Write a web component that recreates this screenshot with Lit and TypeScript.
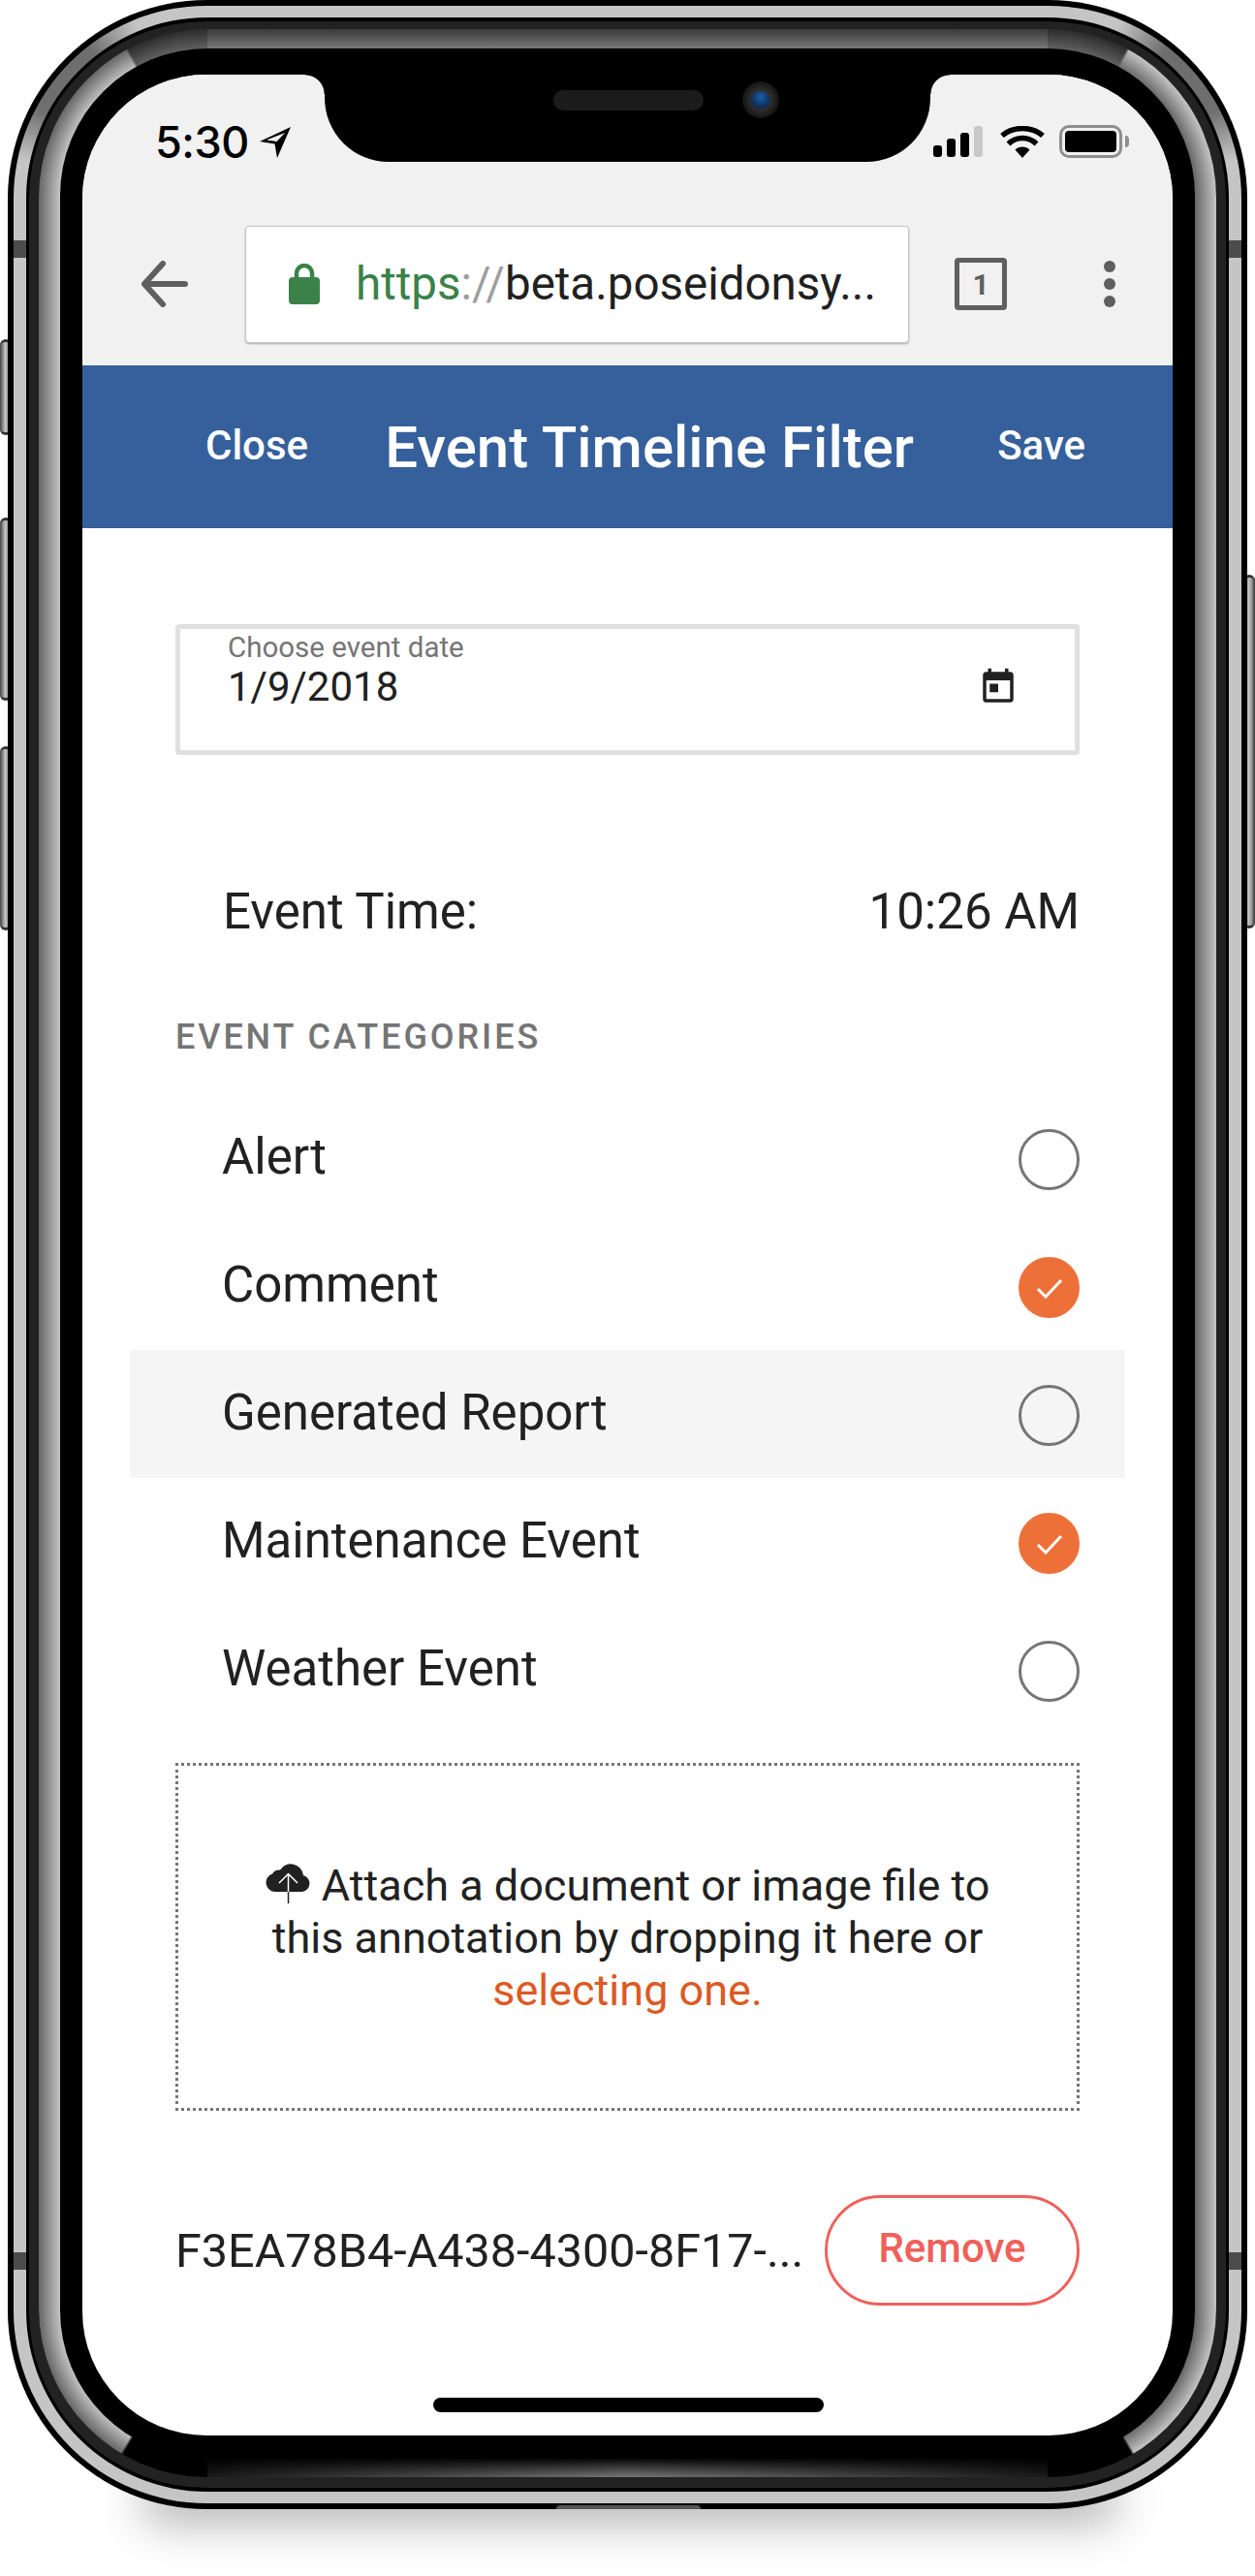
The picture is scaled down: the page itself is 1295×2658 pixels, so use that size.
import { LitElement, html, css, svg } from 'lit';
import { customElement } from 'lit/decorators.js';

const categories = [
  { name: 'Alert', on: false },
  { name: 'Comment', on: true },
  { name: 'Generated Report', on: false, hover: true },
  { name: 'Maintenance Event', on: true },
  { name: 'Weather Event', on: false }
];

const locationIcon = svg`<path fill-rule="evenodd" d="M32 1 0 16l15.500 2.500L18 33zM26 7 17.600 16 7 14.600z" fill="#000"/>`;

@customElement('app-root')
export class AppRoot extends LitElement {
  static styles = css`
    :host {
      display: block;
      height: 2658px;
      position: relative;
      overflow: hidden;
      background: #fff;
      font-family: Roboto, sans-serif;
      color: #212121;
    }

    .sombra {
      position: absolute;
      left: 150px;
      width: 1000px;
      top: 2560px;
      height: 40px;
      background: rgba(0, 0, 0, 0.36);
      filter: blur(24px);
    }

    .lateral {
      position: absolute;
      width: 12px;
      border-radius: 6px;
      background: linear-gradient(90deg, #444, #c4c4c4 45%, #999 70%, #333);
      border-top: 3px solid #333;
      border-bottom: 3px solid #333;
      box-sizing: border-box;
    }

    .marco {
      position: relative;
      box-sizing: border-box;
      width: 1279px;
      height: 2589px;
      margin-left: 8px;
      border-radius: 205px;
      background: #000;
      padding: 6px;
    }

    .plata {
      height: 100%;
      box-sizing: border-box;
      padding: 12px 13px;
      border-radius: 199px;
      background-color: #c6c5c6;
      background-repeat: no-repeat;
      background-size: 199px 199px;
      background-position: 0 0, 100% 0;
      background-image:
        conic-gradient(from 270deg at 100% 100%, transparent 0 12deg, #6e6e6e 28deg 52deg, transparent 68deg),
        conic-gradient(from 0deg at 0 100%, transparent 22deg, #6e6e6e 38deg 62deg, transparent 78deg);
    }

    .antena {
      position: absolute;
      width: 13px;
      height: 18px;
      background: #4c4c4c;
    }

    .negro {
      height: 100%;
      box-sizing: border-box;
      padding: 4px 3px;
      border-radius: 187px;
      background: #000;
    }

    .oscuro {
      height: 100%;
      box-sizing: border-box;
      padding: 8px 10px 11px;
      border-radius: 183px;
      background: #222;
    }

    .bisel {
      position: relative;
      overflow: hidden;
      height: 100%;
      box-sizing: border-box;
      padding: 20px 22px;
      border-radius: 174px;
      background-color: #000;
      background-repeat: no-repeat;
      background-image:
        radial-gradient(circle at 100% 100%, #646464 152px, #2c2c2c 174px),
        radial-gradient(circle at 0 100%, #646464 152px, #2c2c2c 174px),
        linear-gradient(90deg, #666, #c4c4c4),
        linear-gradient(90deg, #666, #c4c4c4),
        linear-gradient(180deg, #3a3a3a, #777),
        linear-gradient(180deg, #000, transparent),
        linear-gradient(90deg, #1a1a1a, #777 50%, #1a1a1a);
      background-size:
        174px 174px, 174px 174px,
        22px calc(100% - 348px), 22px calc(100% - 348px),
        calc(100% - 348px) 20px, calc(100% - 348px) 20px, calc(100% - 348px) 20px;
      background-position:
        0 0, 100% 0,
        0 50%, 100% 50%,
        50% 0, 50% 100%, 50% 100%;
    }

    /* brillo curvo de cada esquina del bisel */
    .esquina {
      position: absolute;
      width: 174px;
      height: 174px;
    }

    .esquina.si {
      left: 0;
      top: 0;
      background: radial-gradient(circle at 100% 100%, #c4c4c4 152px, #666 174px);
      -webkit-mask-image: conic-gradient(from 270deg at 100% 100%, #000 61deg, transparent 62deg);
      mask-image: conic-gradient(from 270deg at 100% 100%, #000 61deg, transparent 62deg);
    }

    .esquina.sd {
      right: 0;
      top: 0;
      background: radial-gradient(circle at 0 100%, #666 152px, #c4c4c4 174px);
      -webkit-mask-image: conic-gradient(from 0deg at 0 100%, transparent 28deg, #000 29deg);
      mask-image: conic-gradient(from 0deg at 0 100%, transparent 28deg, #000 29deg);
    }

    .esquina.ii {
      left: 0;
      bottom: 0;
      background: radial-gradient(circle at 100% 0, #c4c4c4 152px, #666 174px);
      -webkit-mask-image: conic-gradient(from 180deg at 100% 0, transparent 30deg, #000 31deg);
      mask-image: conic-gradient(from 180deg at 100% 0, transparent 30deg, #000 31deg);
    }

    .esquina.id {
      right: 0;
      bottom: 0;
      background: radial-gradient(circle at 0 0, #666 152px, #c4c4c4 174px);
      -webkit-mask-image: conic-gradient(from 90deg at 0 0, #000 59deg, transparent 60deg);
      mask-image: conic-gradient(from 90deg at 0 0, #000 59deg, transparent 60deg);
    }

    .borde {
      position: relative;
      height: 100%;
      box-sizing: border-box;
      padding: 27px 23px 23px;
      border-radius: 152px;
      background: #000;
    }

    .pantalla {
      position: relative;
      height: 100%;
      overflow: hidden;
      border-radius: 128px;
      background: #fff;
      display: flex;
      flex-direction: column;
    }

    /* muesca, va encima de la barra de estado */
    .muesca {
      position: absolute;
      top: 0;
      left: 250px;
      width: 625px;
      height: 90px;
      background: #000;
      border-radius: 0 0 66px 66px;
    }

    .muesca::before,
    .muesca::after {
      content: '';
      position: absolute;
      top: 0;
      width: 20px;
      height: 20px;
      background: radial-gradient(circle at 0 100%, transparent 19px, #000 20px);
    }

    .muesca::before {
      left: -20px;
    }

    .muesca::after {
      right: -20px;
      background: radial-gradient(circle at 100% 100%, transparent 19px, #000 20px);
    }

    .altavoz {
      position: absolute;
      left: 236px;
      top: 16px;
      width: 155px;
      height: 21px;
      border-radius: 11px;
      background: #1b1b1b;
    }

    .camara {
      position: absolute;
      left: 431px;
      top: 7px;
      width: 38px;
      height: 38px;
      border-radius: 50%;
      background: radial-gradient(circle, #2d2d2d 40%, #101010 75%);
      display: flex;
      align-items: center;
      justify-content: center;
    }

    .camara i {
      width: 20px;
      height: 18px;
      border-radius: 50%;
      background: radial-gradient(circle at 50% 35%, #1d5ea6, #0d2a55 70%);
    }

    .navegador {
      background: #f1f1f1;
      height: 300px;
      flex: none;
    }

    .estado {
      box-sizing: border-box;
      height: 120px;
      padding: 18px 45px 0 75px;
      display: flex;
      align-items: center;
      color: #000;
    }

    .hora {
      font-family: Inter, sans-serif;
      font-size: 45px;
      font-weight: 500;
      letter-spacing: -0.5px;
    }

    .ubicacion {
      margin-left: 11px;
    }

    .derecha {
      margin-left: auto;
      display: flex;
      align-items: center;
    }

    .barras {
      display: flex;
      align-items: flex-end;
      gap: 5px;
      height: 32px;
    }

    .barras i {
      width: 9px;
      border-radius: 3px;
      background: #000;
    }

    .barras i.off {
      background: #c8c8c8;
    }

    .wifi {
      margin-left: 18px;
    }

    .bateria {
      margin-left: 15px;
      box-sizing: border-box;
      width: 65px;
      height: 34px;
      border: 3px solid #8e8e8e;
      border-radius: 10px;
      padding: 3px;
    }

    .bateria i {
      display: block;
      height: 100%;
      border-radius: 4px;
      background: #000;
    }

    .punta {
      margin-left: 3px;
      width: 4px;
      height: 12px;
      border-radius: 0 4px 4px 0;
      background: #8e8e8e;
    }

    .barra-url {
      box-sizing: border-box;
      height: 180px;
      padding: 12px 0 0 61px;
      display: flex;
      align-items: center;
    }

    .caja-url {
      margin-left: 59px;
      box-sizing: border-box;
      width: 685px;
      height: 121px;
      padding-left: 44px;
      background: #fff;
      border: 1px solid #c4c4c4;
      border-radius: 4px;
      box-shadow: 0 1px 2px rgba(0, 0, 0, 0.3);
      display: flex;
      align-items: center;
      gap: 37px;
      font-size: 47.500px;
      white-space: nowrap;
      overflow: hidden;
    }

    .verde {
      color: #3a8249;
    }

    .gris {
      color: #9e9e9e;
    }

    .pestanas {
      margin-left: 47px;
      box-sizing: border-box;
      width: 54px;
      height: 54px;
      border: 5px solid #5f5f5f;
      border-radius: 4px;
      display: flex;
      align-items: center;
      justify-content: center;
      font-size: 30px;
      font-weight: 700;
      color: #5f5f5f;
    }

    .menu {
      margin-left: 100px;
      display: flex;
      flex-direction: column;
      gap: 6px;
    }

    .menu i {
      width: 12px;
      height: 12px;
      border-radius: 50%;
      background: #5f5f5f;
    }

    .cabecera {
      flex: none;
      box-sizing: border-box;
      height: 168px;
      padding: 0 90px 0 127px;
      background: #35609c;
      color: #fff;
      display: flex;
      align-items: center;
      justify-content: space-between;
      font-size: 42px;
      font-weight: 500;
    }

    .cabecera span {
      padding-bottom: 3px;
    }

    .cabecera .titulo {
      font-size: 60px;
      margin-right: 7px;
      padding-bottom: 0;
    }

    .contenido {
      flex: 1;
      padding: 99px 96px 0 96px;
    }

    .fecha {
      box-sizing: border-box;
      height: 135px;
      border: 5px solid #e0e0e0;
      border-radius: 4px;
      padding: 3px 58px 0 49px;
      position: relative;
    }

    .fecha small {
      display: block;
      font-size: 29.500px;
      line-height: 32px;
      color: #757575;
    }

    .fecha .valor {
      display: flex;
      justify-content: space-between;
      align-items: center;
      font-size: 42px;
      line-height: 50px;
    }

    .fila-hora {
      margin-top: 95px;
      height: 132px;
      padding-left: 49px;
      display: flex;
      justify-content: space-between;
      align-items: center;
      font-size: 51px;
    }

    .rotulo {
      margin: 41px 0 0;
      height: 46px;
      line-height: 46px;
      font-size: 36px;
      font-weight: 500;
      letter-spacing: 2.900px;
      color: #757575;
    }

    .lista {
      margin: 0 -47px;
      padding-top: 36px;
    }

    .fila {
      box-sizing: border-box;
      height: 132px;
      padding: 0 47px 3px 95px;
      display: flex;
      align-items: center;
      justify-content: space-between;
      font-size: 51px;
    }

    .fila.activa {
      background: #f5f5f5;
    }

    .circulo {
      box-sizing: border-box;
      width: 63px;
      height: 63px;
      margin-top: 6px;
      border-radius: 50%;
      border: 3px solid #757575;
      display: flex;
      align-items: center;
      justify-content: center;
    }

    .circulo.marcado {
      background: #ee7039;
      border-color: #ee7039;
    }

    .zona {
      margin-top: 30px;
      box-sizing: border-box;
      height: 359px;
      border: 3px dotted #757575;
      padding: 2px 60px 0;
      display: flex;
      align-items: center;
      justify-content: center;
      text-align: center;
      font-size: 45px;
      line-height: 54px;
    }

    .nube {
      vertical-align: -3px;
    }

    .enlace {
      color: #dc5a23;
    }

    .adjunto {
      margin-top: 87px;
      display: flex;
      align-items: center;
      justify-content: space-between;
      font-size: 48.500px;
    }

    .quitar {
      box-sizing: border-box;
      width: 263px;
      height: 114px;
      padding: 0 0 5px;
      border: 3px solid #f0605a;
      border-radius: 57px;
      background: #fff;
      color: #f0605a;
      font-family: inherit;
      font-size: 42px;
      font-weight: 500;
    }

    .inicio {
      position: absolute;
      left: 362px;
      bottom: 24px;
      width: 403px;
      height: 15px;
      border-radius: 8px;
      background: #000;
    }

    .boton-base {
      position: absolute;
      left: 566px;
      bottom: 0;
      width: 149px;
      height: 4px;
      border-radius: 6px 6px 0 0;
      background: #555;
    }
  `;

  render() {
    return html`
      <div class="sombra"></div>
      <div class="lateral" style="left:0;top:350px;height:99px"></div>
      <div class="lateral" style="left:0;top:534px;height:189px"></div>
      <div class="lateral" style="left:0;top:770px;height:190px"></div>
      <div class="lateral" style="left:1283px;top:593px;height:365px"></div>
      <div class="marco">
        <div class="plata">
          <div class="negro">
            <div class="oscuro">
              <div class="bisel">
                <div class="esquina si"></div>
                <div class="esquina sd"></div>
                <div class="esquina ii"></div>
                <div class="esquina id"></div>
                <div class="borde">
                  <div class="pantalla">
                    <div class="navegador">
                      <div class="estado">
                        <span class="hora">5:30</span>
                        <svg class="ubicacion" width="32" height="33" viewBox="0 0 32 33">${locationIcon}</svg>
                        <div class="derecha">
                          <div class="barras">
                            <i style="height:12px"></i><i style="height:19px"></i><i style="height:25px"></i><i class="off" style="height:32px"></i>
                          </div>
                          <svg class="wifi" width="46" height="33" viewBox="0 0 46 33">
                            <path d="M23 33 15.500 24.500C19.500 20.500 26.500 20.500 30.500 24.500z" fill="#000" />
                            <path d="M8.500 16.500C16.500 8.500 29.500 8.500 37.500 16.500M2 8C13.500-2 32.500-2 44 8" transform="translate(0 2)" fill="none" stroke="#000" stroke-width="5.500" />
                          </svg>
                          <div class="bateria"><i></i></div>
                          <span class="punta"></span>
                        </div>
                      </div>
                      <div class="barra-url">
                        <svg width="48" height="48" viewBox="0 0 48 48">
                          <path d="M45 24H4M22 3 3 24l19 21" fill="none" stroke="#5f5f5f" stroke-width="6" stroke-linecap="round" stroke-linejoin="round" />
                        </svg>
                        <div class="caja-url">
                          <svg width="32" height="42" viewBox="0 0 32 42" style="flex:none">
                            <path d="M8 16V10a8 8 0 0 1 16 0v6" fill="none" stroke="#3a8249" stroke-width="4.500" />
                            <rect x="0" y="14" width="32" height="28" rx="4" fill="#3a8249" />
                          </svg>
                          <span><span class="verde">https</span><span class="gris">://</span>beta.poseidonsy...</span>
                        </div>
                        <div class="pestanas">1</div>
                        <div class="menu"><i></i><i></i><i></i></div>
                      </div>
                    </div>
                    <div class="cabecera">
                      <span>Close</span>
                      <span class="titulo">Event Timeline Filter</span>
                      <span>Save</span>
                    </div>
                    <div class="contenido">
                      <div class="fecha">
                        <small>Choose event date</small>
                        <div class="valor">
                          <span>1/9/2018</span>
                          <svg width="42" height="42" viewBox="0 0 24 24">
                            <path d="M19 3h-1V1h-2v2H8V1H6v2H5a2 2 0 0 0-2 2v14a2 2 0 0 0 2 2h14a2 2 0 0 0 2-2V5a2 2 0 0 0-2-2zm0 16H5V8h14zM7 10h5v5H7z" fill="#212121" />
                          </svg>
                        </div>
                      </div>
                      <div class="fila-hora"><span>Event Time:</span><span>10:26 AM</span></div>
                      <h2 class="rotulo">EVENT CATEGORIES</h2>
                      <div class="lista">
                        ${categories.map(c => html`
                          <div class="fila ${c.hover ? 'activa' : ''}">
                            <span>${c.name}</span>
                            <span class="circulo ${c.on ? 'marcado' : ''}">
                              ${c.on ? html`<svg width="28" height="22" viewBox="0 0 28 22"><path d="M2 12l8 8L26 3" fill="none" stroke="#fff" stroke-width="3" /></svg>` : ''}
                            </span>
                          </div>
                        `)}
                      </div>
                      <div class="zona">
                        <div>
                          <svg class="nube" width="47" height="41" viewBox="0 0 47 41">
                            <path d="M10 29A9.500 9.500 0 0 1 7 10.500 8 8 0 0 1 15 6.500 13 13 0 0 1 39 12 8.700 8.700 0 0 1 38 29z" fill="#212121" />
                            <path d="M23.500 11V29M14 20l9.500-9.500L33 20" fill="none" stroke="#fff" stroke-width="1.500" />
                            <path d="M23.500 29V41" stroke="#212121" stroke-width="1.500" />
                          </svg>
                          Attach a document or image file to this annotation by dropping it here or
                          <span class="enlace">selecting one.</span>
                        </div>
                      </div>
                      <div class="adjunto">
                        <span>F3EA78B4-A438-4300-8F17-...</span>
                        <button class="quitar">Remove</button>
                      </div>
                    </div>
                    <div class="muesca">
                      <div class="altavoz"></div>
                      <div class="camara"><i></i></div>
                    </div>
                    <div class="inicio"></div>
                  </div>
                </div>
              </div>
            </div>
          </div>
        </div>
        <div class="antena" style="left:6px;top:248px"></div>
        <div class="antena" style="right:6px;top:248px"></div>
        <div class="antena" style="left:6px;top:2324px"></div>
        <div class="antena" style="right:6px;top:2324px"></div>
        <div class="boton-base"></div>
      </div>
    `;
  }
}
